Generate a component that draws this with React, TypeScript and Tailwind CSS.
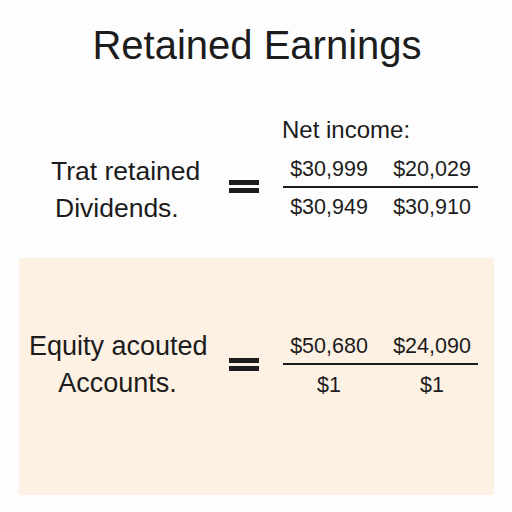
const font = { fontFamily: '"Liberation Sans", Arial, sans-serif' };

function Equals({ top }: { top: string }) {
  return (
    <div className={`flex flex-col gap-[3px] w-[30px] shrink-0 ${top}`}>
      <div className="h-[5px] bg-[#1c1c1c]" />
      <div className="h-[5px] bg-[#1c1c1c]" />
    </div>
  );
}

function Fraction({ top, num, den, gap }: { top: string; num: string[]; den: string[]; gap: string }) {
  return (
    <div className={`w-[195px] shrink-0 ${top}`}>
      <div className="flex pl-[7px] gap-[25px] text-[21.5px] leading-[28px]">
        {num.map((n) => (
          <span key={n} className="w-[78px] text-center">{n}</span>
        ))}
      </div>
      <div className="h-[2px] mt-[3px] bg-[#1c1c1c]" />
      <div className={`flex pl-[7px] gap-[25px] text-[21.5px] leading-[28px] ${gap}`}>
        {den.map((d, i) => (
          <span key={i} className="w-[78px] text-center">{d}</span>
        ))}
      </div>
    </div>
  );
}

export default function App() {
  return (
    <div style={font} className="w-[512px] h-[512px] bg-[#fdfdfd] text-[#1c1c1c] flex flex-col">
      <h1 className="pt-[25px] text-[40px] leading-[40px] text-center pl-[2px]">Retained Earnings</h1>

      <section className="mt-[51px]">
        <p className="pl-[282px] text-[24px] leading-[28px]">Net income:</p>
        <div className="flex items-start pl-[51px]">
          <div className="w-[178px] shrink-0 mt-[9px] text-[26.5px] leading-[37px]">
            <div>Trat retained</div>
            <div className="pl-[4px]">Dividends.</div>
          </div>
          <Equals top="mt-[36px]" />
          <div className="ml-[24px]">
            <Fraction
              top="mt-[11px]"
              num={["$30,999", "$20,029"]}
              den={["$30,949", "$30,910"]}
              gap="mt-[5px]"
            />
          </div>
        </div>
      </section>

      <section className="mt-[31px] ml-[19px] w-[475px] h-[237px] bg-[#fdf1e4] flex items-start">
        <div className="ml-[10px] w-[177px] shrink-0 mt-[70px] text-[27px] leading-[37px] text-center">
          <div className="whitespace-nowrap">Equity acouted</div>
          <div>Accounts.</div>
        </div>
        <Equals top="ml-[23px] mt-[100px]" />
        <div className="ml-[24px]">
          <Fraction
            top="mt-[74px]"
            num={["$50,680", "$24,090"]}
            den={["$1", "$1"]}
            gap="mt-[6px]"
          />
        </div>
      </section>
    </div>
  );
}
